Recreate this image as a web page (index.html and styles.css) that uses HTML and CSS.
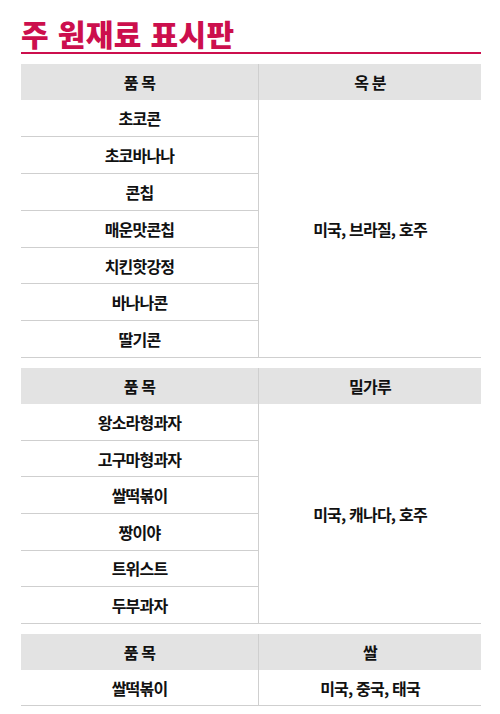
FILE: index.html
```html
<!DOCTYPE html>
<html lang="ko">
<head>
<meta charset="utf-8">
<link rel="stylesheet" href="styles.css">
</head>
<body>
<div class="page">
  <h1 class="title">주 원재료 표시판</h1>
  <table class="tbl">
    <tr><th>품 목</th><th>옥 분</th></tr>
    <tr><td>초코콘</td><td class="origin" rowspan="7">미국, 브라질, 호주</td></tr>
    <tr><td>초코바나나</td></tr>
    <tr><td>콘칩</td></tr>
    <tr><td>매운맛콘칩</td></tr>
    <tr><td>치킨핫강정</td></tr>
    <tr><td>바나나콘</td></tr>
    <tr><td>딸기콘</td></tr>
  </table>
  <table class="tbl tbl-mid">
    <tr><th>품 목</th><th>밀가루</th></tr>
    <tr><td>왕소라형과자</td><td class="origin" rowspan="6">미국, 캐나다, 호주</td></tr>
    <tr><td>고구마형과자</td></tr>
    <tr><td>쌀떡볶이</td></tr>
    <tr><td>짱이야</td></tr>
    <tr><td>트위스트</td></tr>
    <tr><td>두부과자</td></tr>
  </table>
  <table class="tbl tbl-mid">
    <tr><th>품 목</th><th>쌀</th></tr>
    <tr><td>쌀떡볶이</td><td class="origin">미국, 중국, 태국</td></tr>
  </table>
</div>
</body>
</html>
```
FILE: styles.css
```css
html, body {
  margin: 0;
  padding: 0;
  background: #ffffff;
}
.page {
  width: 460px;
  padding: 14px 19px 0 21px;
  font-family: "Noto Sans CJK KR", "Noto Sans", sans-serif;
  color: #111111;
}
.title {
  margin: 0 0 10px 0;
  font-size: 30px;
  font-weight: 900;
  line-height: 38px;
  letter-spacing: 0.4px;
  color: #cc0f4d;
  border-bottom: 2px solid #cc0f4d;
}
.tbl {
  width: 460px;
  border-collapse: collapse;
  table-layout: fixed;
  margin-bottom: 10px;
}
.tbl th, .tbl td {
  padding: 0;
  height: 35.9px;
  text-align: center;
  vertical-align: middle;
  font-size: 16px;
  font-weight: 700;
  letter-spacing: -0.8px;
  border-bottom: 1px solid #cfcfcf;
}
.tbl-mid td {
  height: 35.6px;
}
.tbl th {
  background: #e3e3e3;
  border-bottom: none;
  height: 36px;
}
.tbl th:first-child, .tbl td:first-child {
  width: 237px;
  border-right: 1px solid #cfcfcf;
}
```
